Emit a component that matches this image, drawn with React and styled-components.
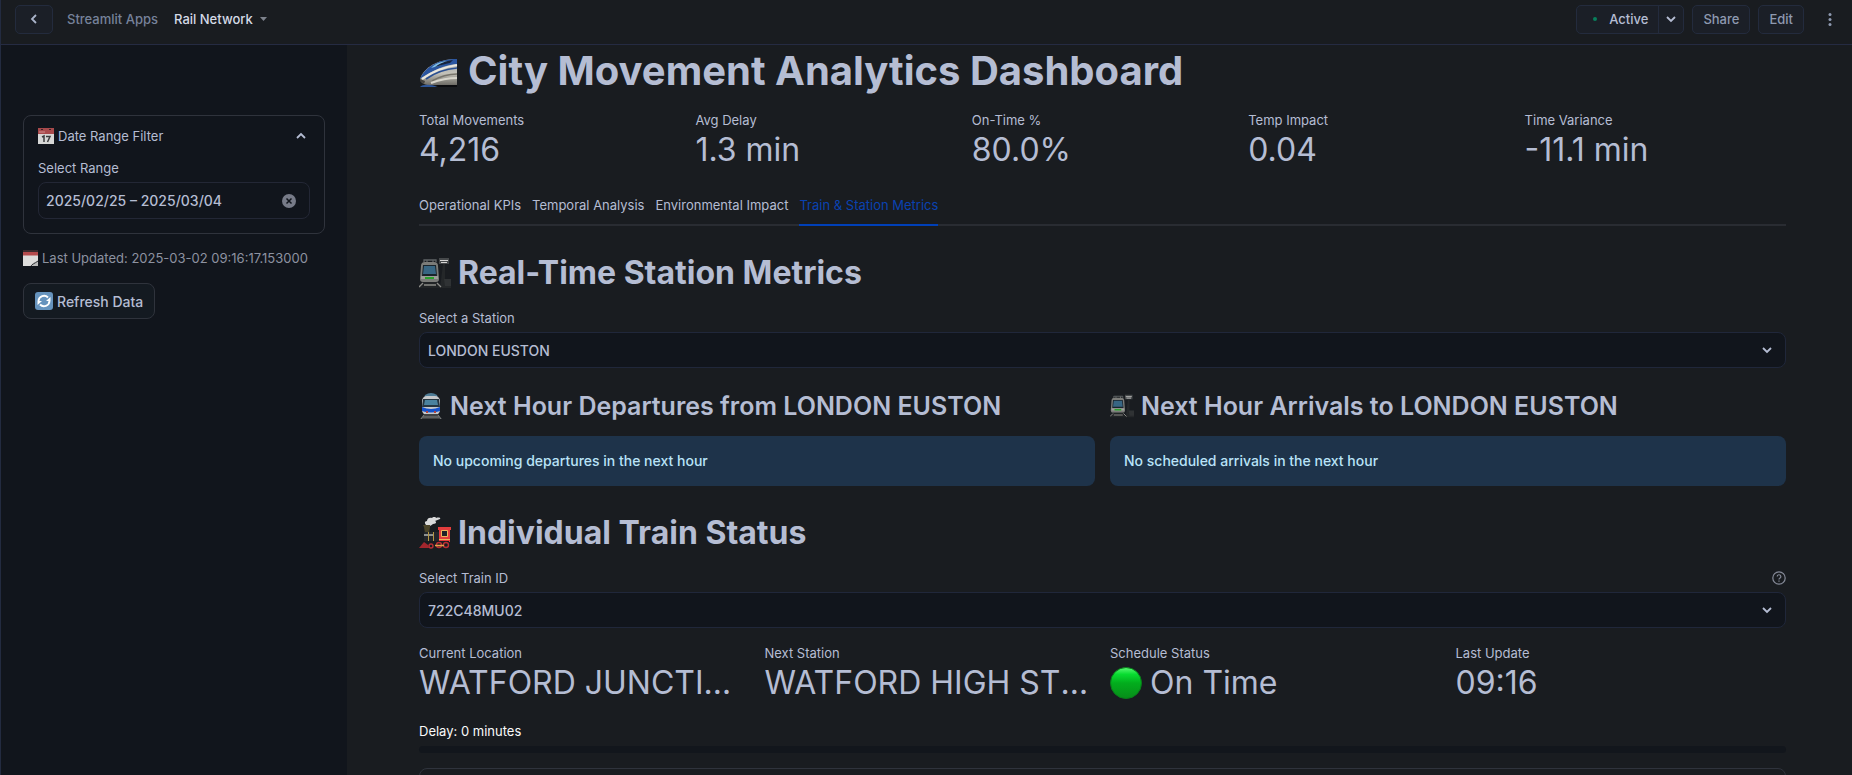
import React from "react";
import styled, { createGlobalStyle, css } from "styled-components";

const Global = createGlobalStyle`
  *, *::before, *::after { box-sizing: border-box; }
  html { background: #191c20; }
  body { margin: 0; font-family: Inter, "Liberation Sans", sans-serif; font-size: 14px; color: #b5bdd3; }
  button, input, select { font-family: inherit; }
  h1, h2, h3, p { margin: 0; }
  svg { display: block; flex: none; }
`;

const Page = styled.div`
  display: flex;
  flex-direction: column;
  height: 100vh;
  border-left: 1px solid #232b40;
`;

const TopBar = styled.header`
  display: flex;
  align-items: center;
  justify-content: space-between;
  flex: none;
  height: 45px;
  padding: 0 16px 6px 14px;
  border-bottom: 1px solid #252b42;
`;

const Cluster = styled.div`
  display: flex;
  align-items: center;
  gap: 8px;
`;

const barControl = css`
  display: flex;
  align-items: center;
  justify-content: center;
  height: 29px;
  border: 1px solid #232b3d;
  background: #1b1f27;
  color: #8e99b0;
  font-size: 13px;
  font-weight: 500;
`;

const BarButton = styled.button`
  ${barControl}
  border-radius: 5px;
  padding: 0 10px;
`;

const BackButton = styled(BarButton)`
  width: 38px;
  padding: 0;
  color: #aab4ca;
`;

const SplitButton = styled.div`
  ${barControl}
  border-radius: 5px;
  overflow: hidden;
`;

const SplitPart = styled.button`
  display: flex;
  align-items: center;
  gap: 12px;
  height: 100%;
  padding: ${(p) => (p.$menu ? "0 6px" : "0 10px 0 16px")};
  border: 0;
  border-left: ${(p) => (p.$menu ? "1px solid #232b3d" : "0")};
  background: none;
  color: #b5bdd3;
  font-size: 13px;
  font-weight: 500;
`;

const StatusDot = styled.span`
  width: 4px;
  height: 4px;
  border-radius: 50%;
  background: #087f5b;
`;

const MoreButton = styled.button`
  display: flex;
  padding: 4px;
  margin-left: 12px;
  border: 0;
  background: none;
  color: #8e99b0;
`;

const Crumbs = styled.nav`
  display: flex;
  align-items: center;
  gap: 16px;
  margin-left: 6px;
  font-size: 13px;
  font-weight: 500;
`;

const CrumbLink = styled.a`
  color: #76829a;
  text-decoration: none;
`;

const CrumbButton = styled.button`
  display: flex;
  align-items: center;
  gap: 7px;
  padding: 0;
  border: 0;
  background: none;
  color: #d5dae6;
  font-size: 13px;
  font-weight: 500;
`;

const Body = styled.div`
  display: flex;
  flex: 1;
  min-height: 0;
`;

const Sidebar = styled.aside`
  flex: none;
  width: 346px;
  padding: 70px 22px 0;
  background: #11151c;
`;

const Expander = styled.section`
  padding: 13px 14px 14px;
  border: 1px solid #2f333c;
  border-radius: 8px;
`;

const ExpanderToggle = styled.button`
  display: flex;
  align-items: center;
  justify-content: space-between;
  width: 100%;
  height: 14px;
  padding: 0 3px 0 0;
  border: 0;
  background: none;
  color: #b5bdd3;
  font-size: 13px;
`;

const IconText = styled.span`
  display: flex;
  align-items: center;
  gap: 4px;
`;

const Label = styled.label`
  display: block;
  font-size: 13px;
  line-height: 20px;
`;

const DateField = styled.div`
  display: flex;
  align-items: center;
  height: 37px;
  margin-top: 4px;
  padding: 0 13px 0 7px;
  border: 1px solid #232735;
  border-radius: 8px;
`;

const DateInput = styled.input`
  flex: 1;
  min-width: 0;
  padding: 0;
  border: 0;
  outline: 0;
  background: none;
  color: #b5bdd3;
  font-size: 14px;
  font-weight: 500;
`;

const ClearButton = styled.button`
  padding: 0;
  border: 0;
  background: none;
`;

const Updated = styled.p`
  display: flex;
  align-items: center;
  gap: 4px;
  margin-top: 14px;
  color: #8d92a0;
  font-size: 13px;
  line-height: 20px;
`;

const RefreshButton = styled.button`
  display: flex;
  align-items: center;
  gap: 4px;
  height: 36px;
  margin-top: 15px;
  padding: 0 11px;
  border: 1px solid #2f333c;
  border-radius: 8px;
  background: #141a21;
  color: #b5bdd3;
  font-size: 14px;
  font-weight: 500;
`;

const Main = styled.main`
  flex: 1;
  min-width: 0;
  padding: 1px 66px 0 72px;
  overflow-y: auto;
  scrollbar-width: none;
`;

const Title = styled.h1`
  display: flex;
  align-items: center;
  gap: 10px;
  font-size: 40px;
  line-height: 50px;
  font-weight: 700;
`;

const Heading = styled.h2`
  display: flex;
  align-items: center;
  gap: 7px;
  font-size: 32px;
  line-height: 40px;
  font-weight: 700;
`;

const Subheading = styled.h3`
  display: flex;
  align-items: center;
  gap: 7px;
  font-size: 25px;
  line-height: 32px;
  font-weight: 600;
`;

const Section = styled.section`
  margin-top: 27px;
`;

const Columns = styled.div`
  display: grid;
  grid-template-columns: repeat(${(p) => p.$count}, minmax(0, 1fr));
  gap: 15px;
  margin-top: ${(p) => p.$top}px;
`;

const MetricLabel = styled.p`
  font-size: 13px;
  line-height: 20px;
`;

const MetricValue = styled.p`
  line-height: 40px;
  font-size: 32px;
  overflow: hidden;
  white-space: nowrap;
  text-overflow: ellipsis;
`;

const StatusValue = styled(MetricValue)`
  display: flex;
  align-items: center;
  gap: 8px;
`;

const Tabs = styled.div`
  display: flex;
  gap: 11px;
  margin-top: 18px;
  box-shadow: inset 0 -2px #292c32;
`;

const Tab = styled.button`
  height: 38px;
  padding: 0 0 2px;
  border: 0;
  border-bottom: 2px solid ${(p) => (p.$active ? "#0040b8" : "transparent")};
  background: none;
  color: ${(p) => (p.$active ? "#0a42b0" : "#b5bdd3")};
  font-size: 13px;
`;

const LabelRow = styled.div`
  display: flex;
  align-items: center;
  justify-content: space-between;
  margin-top: 15px;
`;

const SelectShell = styled.div`
  display: grid;
  align-items: center;
  margin-top: 4px;
  color: #b5bdd3;

  > * { grid-area: 1 / 1; }
  > svg { justify-self: end; margin-right: 13px; pointer-events: none; }
`;

const Select = styled.select`
  appearance: none;
  width: 100%;
  height: 36px;
  padding: 0 8px;
  border: 1px solid #20273a;
  border-radius: 8px;
  background: #11151c;
  color: #b5bdd3;
  font-size: 14px;
  font-weight: 500;
`;

const Alert = styled.p`
  margin-top: 14px;
  padding: 15px 14px;
  border-radius: 8px;
  background: #1e334a;
  color: #b9e3f8;
  font-size: 14px;
  font-weight: 500;
  line-height: 20px;
`;

const DelayLabel = styled.p`
  margin-top: 18px;
  color: #fafafa;
  font-size: 13px;
  line-height: 20px;
`;

const Track = styled.div`
  height: 7px;
  margin-top: 5px;
  border-radius: 4px;
  background: #12161c;
`;

const Details = styled.section`
  height: 60px;
  margin-top: 15px;
  border: 1px solid #2f333c;
  border-radius: 8px;
`;

function Chevron({ size = 12, dir = "down" }) {
  const d = { down: "M2 4l4 4 4-4", up: "M2 8l4-4 4 4", left: "M8 2L4 6l4 4" }[dir];
  return (
    <svg width={size} height={size} viewBox="0 0 12 12" fill="none" stroke="currentColor" strokeWidth="1.8" aria-hidden="true">
      <path d={d} />
    </svg>
  );
}

function CalendarIcon() {
  return (
    <svg width="16" height="16" viewBox="0 0 16 16" aria-hidden="true">
      <path fill="#d7d7d6" d="M0 0h16v16H0z" />
      <path fill="#a84a4c" d="M0 0h16v6H0z" />
      <path fill="#3a2225" d="M3 1h2v1H3zM11 1h2v1h-2z" />
      <path stroke="#d18b8c" d="M2 3v2M4 3v2M6 3v2" />
      <path fill="none" stroke="#3c3c3e" strokeWidth="1.5" d="M4 9l2-1v6M8 8.5h4L9.500 14" />
    </svg>
  );
}

function NotepadIcon() {
  return (
    <svg width="15" height="16" viewBox="0 0 15 16" aria-hidden="true">
      <path fill="#dedddc" d="M0 2h15v9l-5 5H0z" />
      <path fill="#b54b4d" d="M0 2h15v3.500H0z" />
      <path fill="#3b2b2e" d="M0 0h15v2H0z" />
      <path fill="#b9b9b9" d="M9 16c.5-3 2-4 6-5v5z" />
      <path fill="none" stroke="#303236" d="M8 16c1-2 3-2 7-5" />
    </svg>
  );
}

function RefreshIcon() {
  return (
    <svg width="18" height="18" viewBox="0 0 18 18" aria-hidden="true">
      <rect width="18" height="18" rx="3" fill="#6693bd" />
      <path fill="none" stroke="#fff" strokeWidth="1.900" d="M3.500 9a5.500 5.500 0 0 1 9.500-3.500M14.500 9A5.500 5.500 0 0 1 5 12.500" />
      <path fill="#fff" d="M15.500 5v4h-4.500zM2.500 13V9H7z" />
    </svg>
  );
}

function BulletTrainIcon() {
  return (
    <svg width="39" height="40" viewBox="0 -8 39 40" aria-hidden="true">
      <defs>
        <linearGradient id="bulletBody" x1="0" y1="0" x2="0" y2="1">
          <stop offset="0" stopColor="#9aa2a8" />
          <stop offset=".55" stopColor="#c4c2b9" />
          <stop offset="1" stopColor="#6e6c66" />
        </linearGradient>
      </defs>
      <path fill="url(#bulletBody)" d="M38 0v26H10c-4 0-8-2-9-5C3 11 16 0 38 0z" />
      <path fill="#2a55a0" d="M38 0v5C26 6 14 11 1 20 5 10 17 0 38 0z" />
      <path fill="#7fbfe4" d="M12 9C17 4 23 2 30 2c-4 3-10 5-18 7z" />
      <path fill="#16223c" d="M16 8c6-4 10-6 18-7l-3 3c-5 1-9 2-15 4z" />
      <path fill="none" stroke="#e8e6df" strokeWidth="2.200" d="M3 20C13 13 24 8 38 6" />
      <path fill="none" stroke="#2a4f92" strokeWidth="1.600" d="M7 20C14 15 26 10 38 9" />
      <path fill="none" stroke="#77746b" strokeWidth="1.600" d="M13 22c7-4 15-7 25-7" />
      <path fill="none" stroke="#d8d6cc" strokeWidth="2" d="M12 24c8-3 16-5 26-5" />
      <path fill="#44423e" d="M1 20l5 2-1 3-4-3z" />
      <path fill="#0b0c0f" d="M17 26h21v2H19z" />
      <path fill="#2d5598" d="M1 28c2-3 12-3 17 0z" />
    </svg>
  );
}

function StationIcon({ size }) {
  return (
    <svg width={size} height={size} viewBox="0 0 32 32" aria-hidden="true">
      <path fill="#45484a" d="M20 1h10v6H20z" />
      <path stroke="#d4d4d3" d="M21 3.500h8M22 5.500h6" />
      <path fill="#242729" d="M24 7h2v16h6v8H21z" />
      <path fill="#2f3234" d="M25 22h7v7h-6z" />
      <path fill="none" stroke="#5f6365" strokeWidth="1.300" d="M5 5V3h12v2M8 3v3M14 3v3" />
      <path fill="#7b7c79" d="M2 9q0-4 4-4h9q4 0 4 4l1 13q0 3-3 3H4q-3 0-3-3z" />
      <path fill="#1a242b" d="M4 8h13l1 11H3z" />
      <path fill="#386683" d="M5 9h11l1 8H4z" />
      <path fill="#9d9e99" d="M2 19h17v3H2z" />
      <path fill="#29a02d" d="M6 20h9v2H6z" />
      <path fill="#212426" d="M4 25h14l5 6H0z" />
      <path stroke="#8b8b87" strokeWidth="1.300" d="M4 26l-4 4M18 26l4 4M5 28h12" />
    </svg>
  );
}

function MetroIcon() {
  return (
    <svg width="24" height="26" viewBox="0 0 24 26" aria-hidden="true">
      <path fill="#4e7c96" d="M6 2q6-4 12 0l1 3H5z" />
      <rect x="3" y="3" width="18" height="19" rx="5" fill="#c6c8ca" />
      <path fill="#253640" d="M4 6h16l1 8H3z" />
      <path fill="#4a829e" d="M6 7h12l1 5H5z" />
      <path fill="#1552c9" d="M3 14q9 4 18 0v4q-9 3-18 0z" />
      <path fill="#b1433f" d="M7 18h2v2H7zM15 18h2v2h-2z" />
      <path fill="#3e4142" d="M5 21h14l4 5H1z" />
      <path stroke="#7c7e7e" d="M5 22l-3 4M19 22l3 4M4 24h16" />
    </svg>
  );
}

function LocomotiveIcon() {
  return (
    <svg width="32" height="32" viewBox="0 0 32 32" aria-hidden="true">
      <path fill="#d9dadb" d="M7 8c-2-2-1-4 1-4 0-3 3-4 5-3 2-2 4-1 4 0 3-1 5 0 4 1l-5 2c2 1 1 3-2 3-2 2-5 3-7 1z" />
      <path fill="#4a4429" d="M4 8h7v2l-1 6H6l-1-6z" />
      <path fill="#23262b" d="M5 15h15v10H5z" />
      <path fill="#8d9190" d="M5 17h9v2H5z" />
      <path fill="#b49543" d="M9 15h1v9H9zM14 15h1v9h-1z" />
      <path fill="#e33d3d" d="M19 10h13v3h-1v12H20V13h-1z" />
      <path fill="#202228" d="M23 14h5v5h-5z" />
      <path fill="none" stroke="#edb55a" d="M22.500 13.500h6v6h-6zM20 22.500h11" />
      <path fill="#191b20" d="M4 24h26v3H4z" />
      <path fill="#a3262d" d="M0 31l5-6 4 3 1 3z" />
      <g fill="none" stroke="#b92d33" strokeWidth="1.400">
        <circle cx="12" cy="29" r="2" />
        <circle cx="20" cy="28" r="2.500" />
        <circle cx="27" cy="28" r="2.500" />
      </g>
      <path stroke="#e2a24a" strokeWidth="1.500" d="M16 28.500h9" />
    </svg>
  );
}

function GreenCircle() {
  return (
    <svg width="32" height="32" viewBox="0 0 32 32" aria-hidden="true">
      <defs>
        <linearGradient id="lamp" x1="0" y1="0" x2="0" y2="1">
          <stop offset="0" stopColor="#5dfa75" />
          <stop offset=".22" stopColor="#08dc30" />
          <stop offset=".5" stopColor="#02ad1d" />
          <stop offset="1" stopColor="#078d19" />
        </linearGradient>
      </defs>
      <circle cx="16" cy="16" r="15.500" fill="url(#lamp)" stroke="#087d1a" />
    </svg>
  );
}

function Metric({ label, value, icon }) {
  const Value = icon ? StatusValue : MetricValue;
  return (
    <div>
      <MetricLabel>{label}</MetricLabel>
      <Value>{icon}{value}</Value>
    </div>
  );
}

function SelectBox({ id, label, value, help }) {
  return (
    <>
      <LabelRow>
        <Label htmlFor={id}>{label}</Label>
        {help && (
          <svg width="14" height="14" viewBox="0 0 14 14" fill="none" stroke="#858a98" strokeWidth="1.200" role="img" aria-label="Help">
            <circle cx="7" cy="7" r="6.200" />
            <path d="M5.200 5.500a1.800 1.800 0 1 1 2.500 1.700q-.7.300-.7 1.200M7 9.500v1.200" />
          </svg>
        )}
      </LabelRow>
      <SelectShell>
        <Select id={id} defaultValue={value}><option>{value}</option></Select>
        <Chevron />
      </SelectShell>
    </>
  );
}

const kpis = [
  ["Total Movements", "4,216"],
  ["Avg Delay", "1.3 min"],
  ["On-Time %", "80.0%"],
  ["Temp Impact", "0.04"],
  ["Time Variance", "-11.1 min"],
];

const tabs = ["Operational KPIs", "Temporal Analysis", "Environmental Impact", "Train & Station Metrics"];

export default function App() {
  return (
    <Page>
      <Global />
      <TopBar>
        <Cluster>
          <BackButton aria-label="Back"><Chevron dir="left" /></BackButton>
          <Crumbs>
            <CrumbLink href="#apps">Streamlit Apps</CrumbLink>
            <CrumbButton>
              Rail Network
              <svg width="7" height="4" viewBox="0 0 7 4" fill="#7d828c" aria-hidden="true"><path d="M0 0h7L3.500 4z" /></svg>
            </CrumbButton>
          </Crumbs>
        </Cluster>
        <Cluster>
          <SplitButton>
            <SplitPart><StatusDot />Active</SplitPart>
            <SplitPart $menu aria-label="Status options"><Chevron /></SplitPart>
          </SplitButton>
          <BarButton>Share</BarButton>
          <BarButton>Edit</BarButton>
          <MoreButton aria-label="More">
            <svg width="4" height="13" viewBox="0 0 4 13" fill="currentColor" aria-hidden="true">
              <circle cx="2" cy="1.500" r="1.500" /><circle cx="2" cy="6.500" r="1.500" /><circle cx="2" cy="11.500" r="1.500" />
            </svg>
          </MoreButton>
        </Cluster>
      </TopBar>
      <Body>
        <Sidebar>
          <Expander>
            <ExpanderToggle aria-expanded="true">
              <IconText><CalendarIcon />Date Range Filter</IconText>
              <Chevron dir="up" />
            </ExpanderToggle>
            <LabelRow><Label htmlFor="range">Select Range</Label></LabelRow>
            <DateField>
              <DateInput id="range" defaultValue="2025/02/25 – 2025/03/04" />
              <ClearButton aria-label="Clear">
                <svg width="14" height="14" viewBox="0 0 14 14" aria-hidden="true">
                  <circle cx="7" cy="7" r="7" fill="#777b88" />
                  <path stroke="#11151c" strokeWidth="1.500" d="M4.500 4.500l5 5M9.500 4.500l-5 5" />
                </svg>
              </ClearButton>
            </DateField>
          </Expander>
          <Updated><NotepadIcon />Last Updated: 2025-03-02 09:16:17.153000</Updated>
          <RefreshButton><RefreshIcon />Refresh Data</RefreshButton>
        </Sidebar>
        <Main>
          <Title><BulletTrainIcon />City Movement Analytics Dashboard</Title>
          <Columns $count={5} $top={14}>
            {kpis.map(([label, value]) => <Metric key={label} label={label} value={value} />)}
          </Columns>
          <Tabs role="tablist">
            {tabs.map((name, i) => (
              <Tab key={name} role="tab" aria-selected={i === 3} $active={i === 3}>{name}</Tab>
            ))}
          </Tabs>
          <Section>
            <Heading><StationIcon size={32} />Real-Time Station Metrics</Heading>
            <SelectBox id="station" label="Select a Station" value="LONDON EUSTON" />
            <Columns $count={2} $top={22}>
              <div>
                <Subheading><MetroIcon />Next Hour Departures from LONDON EUSTON</Subheading>
                <Alert>No upcoming departures in the next hour</Alert>
              </div>
              <div>
                <Subheading><StationIcon size={24} />Next Hour Arrivals to LONDON EUSTON</Subheading>
                <Alert>No scheduled arrivals in the next hour</Alert>
              </div>
            </Columns>
          </Section>
          <Section>
            <Heading><LocomotiveIcon />Individual Train Status</Heading>
            <SelectBox id="train" label="Select Train ID" value="722C48MU02" help />
            <Columns $count={4} $top={15}>
              <Metric label="Current Location" value="WATFORD JUNCTION" />
              <Metric label="Next Station" value="WATFORD HIGH STREET" />
              <Metric label="Schedule Status" value="On Time" icon={<GreenCircle />} />
              <Metric label="Last Update" value="09:16" />
            </Columns>
            <DelayLabel>Delay: 0 minutes</DelayLabel>
            <Track role="progressbar" aria-label="Delay" aria-valuenow={0} />
            <Details />
          </Section>
        </Main>
      </Body>
    </Page>
  );
}
